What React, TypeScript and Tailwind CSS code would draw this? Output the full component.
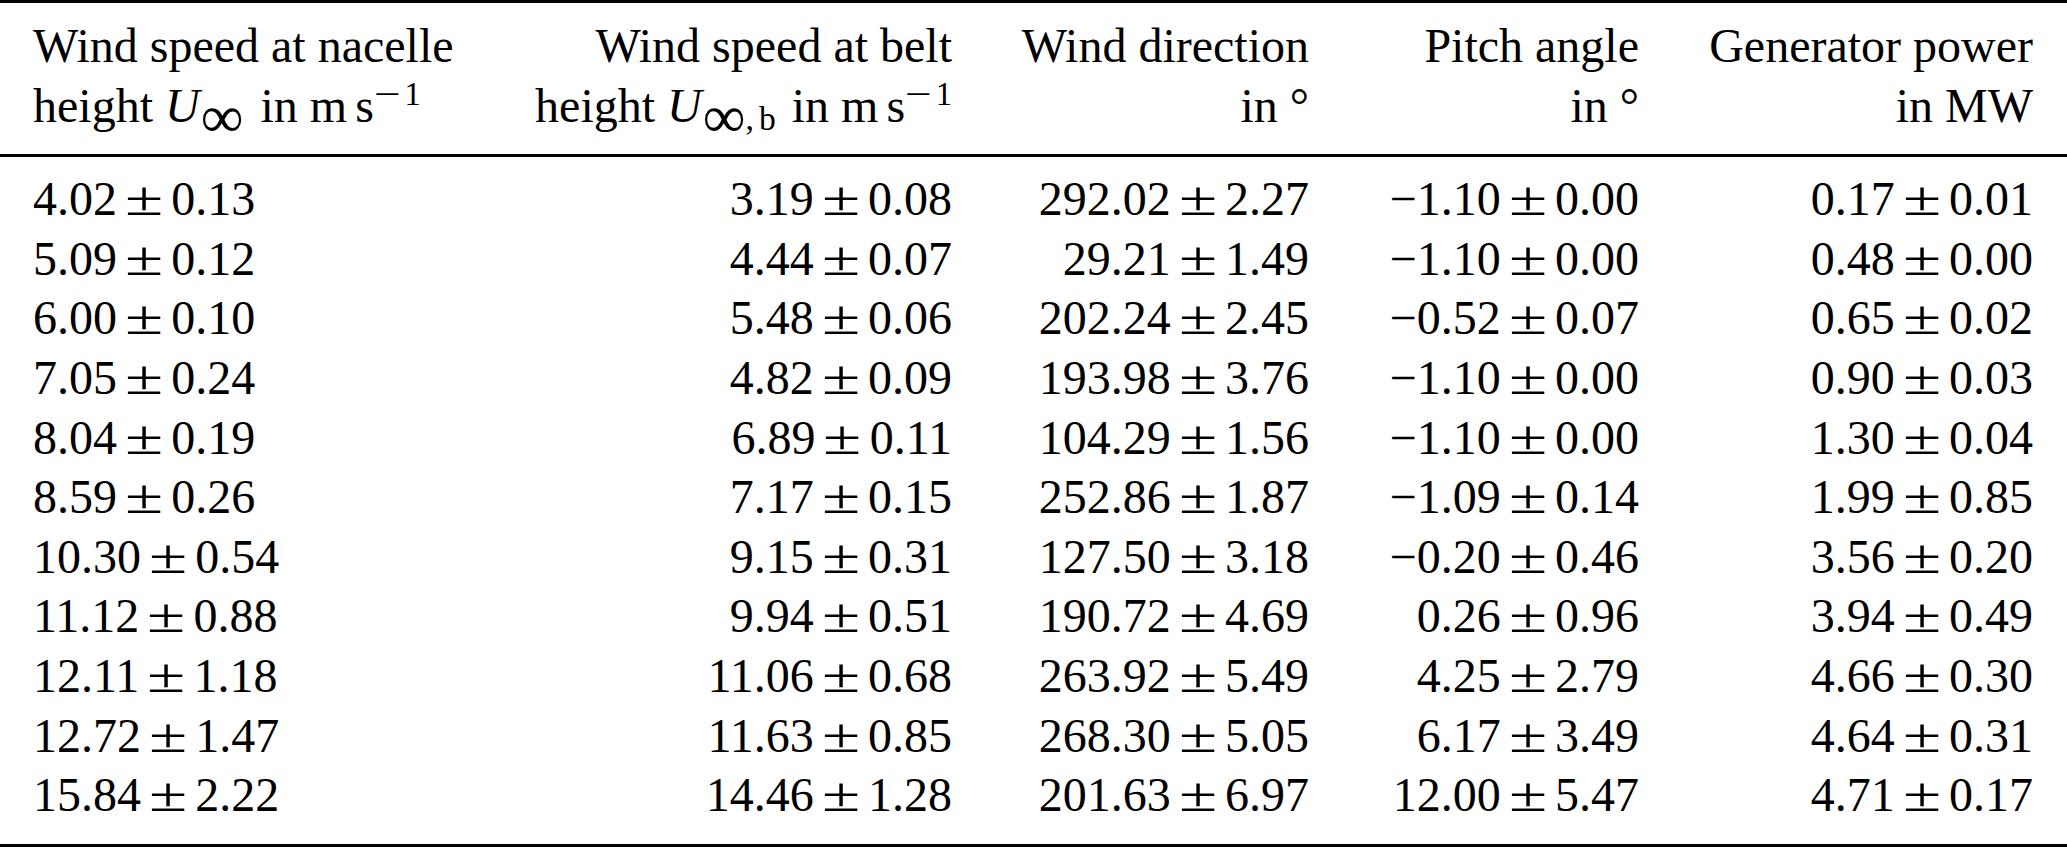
const rows: string[][] = [
  ["4.02±0.13", "3.19±0.08", "292.02±2.27", "−1.10±0.00", "0.17±0.01"],
  ["5.09±0.12", "4.44±0.07", "29.21±1.49", "−1.10±0.00", "0.48±0.00"],
  ["6.00±0.10", "5.48±0.06", "202.24±2.45", "−0.52±0.07", "0.65±0.02"],
  ["7.05±0.24", "4.82±0.09", "193.98±3.76", "−1.10±0.00", "0.90±0.03"],
  ["8.04±0.19", "6.89±0.11", "104.29±1.56", "−1.10±0.00", "1.30±0.04"],
  ["8.59±0.26", "7.17±0.15", "252.86±1.87", "−1.09±0.14", "1.99±0.85"],
  ["10.30±0.54", "9.15±0.31", "127.50±3.18", "−0.20±0.46", "3.56±0.20"],
  ["11.12±0.88", "9.94±0.51", "190.72±4.69", "0.26±0.96", "3.94±0.49"],
  ["12.11±1.18", "11.06±0.68", "263.92±5.49", "4.25±2.79", "4.66±0.30"],
  ["12.72±1.47", "11.63±0.85", "268.30±5.05", "6.17±3.49", "4.64±0.31"],
  ["15.84±2.22", "14.46±1.28", "201.63±6.97", "12.00±5.47", "4.71±0.17"],
];

function Value({ text }: { text: string }) {
  const [a, b] = text.split("±");
  return (
    <span>
      {a}
      <span className="inline-block mx-[14px] scale-x-[1.45]">±</span>
      {b}
    </span>
  );
}

function Unit() {
  return (
    <span>
      m<span className="ml-[0.17em]">s</span>
      <sup className="text-[68%] ml-[4px]">
        <span className="inline-block mr-[8px] scale-x-[1.45]">−</span>1
      </sup>
    </span>
  );
}

function Inf() {
  return <sub className="text-[125%] ml-[1px]">∞</sub>;
}

export default function App() {
  return (
    <div
      className="w-[2067px] h-[848px] bg-white text-black text-[48px] leading-[59.6px]"
      style={{ fontFamily: '"Liberation Serif", "Times New Roman", serif' }}
    >
      {/* header */}
      <div className="border-t-[3px] border-black px-[33px] pt-[13px] pb-[19px] grid grid-cols-[426px_425px_289px_262px_326px] gap-x-[68px]">
        <div className="text-left whitespace-nowrap">
          <div>Wind speed at nacelle</div>
          <div>
            height <i>U</i>
            <Inf />{" "}
            <span className="ml-[5px]">in</span> <Unit />
          </div>
        </div>
        <div className="text-right whitespace-nowrap">
          <div>Wind speed at belt</div>
          <div>
            height <i>U</i>
            <Inf />
            <sub className="text-[70%]">
              ,<span className="ml-[5px]">b</span>
            </sub>{" "}
            <span className="ml-[4px]">in</span> <Unit />
          </div>
        </div>
        <div className="text-right">
          <div>Wind direction</div>
          <div>in °</div>
        </div>
        <div className="text-right">
          <div>Pitch angle</div>
          <div>in °</div>
        </div>
        <div className="text-right">
          <div>Generator power</div>
          <div>in MW</div>
        </div>
      </div>

      {/* body */}
      <div className="border-t-[3px] border-b-[3px] border-black px-[33px] pt-[12px] pb-[19px] grid grid-cols-[426px_425px_289px_262px_326px] gap-x-[68px]">
        {rows.map((row, i) =>
          row.map((cell, j) => (
            <div key={i + "-" + j} className={j === 0 ? "text-left whitespace-nowrap" : "text-right whitespace-nowrap"}>
              <Value text={cell} />
            </div>
          ))
        )}
      </div>
    </div>
  );
}
